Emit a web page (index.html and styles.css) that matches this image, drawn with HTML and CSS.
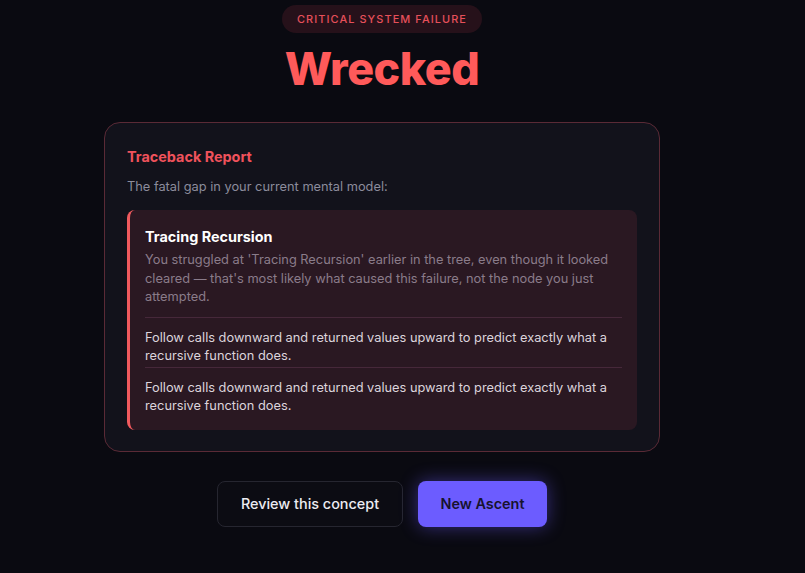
FILE: index.html
```html
<!DOCTYPE html>
<html>
<head>
<meta charset="utf-8">
<link rel="stylesheet" href="styles.css">
</head>
<body>
<main class="page">
  <div class="badge">Critical System Failure</div>
  <h1 class="title">Wrecked</h1>
  <section class="card">
    <h2 class="card-title">Traceback Report</h2>
    <p class="card-sub">The fatal gap in your current mental model:</p>
    <div class="gap">
      <h3 class="gap-title">Tracing Recursion</h3>
      <p class="gap-desc">You struggled at 'Tracing Recursion' earlier in the tree, even though it looked cleared — that's most likely what caused this failure, not the node you just attempted.</p>
      <p class="gap-item">Follow calls downward and returned values upward to predict exactly what a recursive function does.</p>
      <p class="gap-item">Follow calls downward and returned values upward to predict exactly what a recursive function does.</p>
    </div>
  </section>
  <div class="actions">
    <button class="btn btn-ghost">Review this concept</button>
    <button class="btn btn-primary">New Ascent</button>
  </div>
</main>
</body>
</html>
```
FILE: styles.css
```css
* { box-sizing: border-box; }
html, body { margin: 0; padding: 0; }
body {
  background: #0a0a11;
  font-family: Inter, "Noto Sans", sans-serif;
  color: #e8e8f0;
  height: 573px;
  overflow: hidden;
}
.page {
  width: 764px;
  padding-top: 5px;
  display: flex;
  flex-direction: column;
  align-items: center;
}
.badge {
  height: 28px;
  padding: 0 15px;
  border-radius: 14px;
  background: #26111a;
  color: #e6505a;
  font-size: 10.9px;
  font-weight: 500;
  letter-spacing: 1.1px;
  text-transform: uppercase;
  display: flex;
  align-items: center;
}
.title {
  margin: 9px 0 0;
  font-size: 44.8px;
  line-height: 54px;
  font-weight: 800;
  color: #ff5a5a;
  letter-spacing: -0.5px;
}
.card {
  margin-top: 26px;
  width: 556px;
  border: 1px solid #5a2a36;
  border-radius: 16px;
  background: #12121b;
  padding: 24px 22px 21px 22px;
}
.card-title {
  margin: 0;
  font-size: 14.4px;
  line-height: 20px;
  font-weight: 700;
  color: #f0525c;
}
.card-sub {
  margin: 11px 0 0;
  font-size: 12.8px;
  line-height: 18px;
  color: #8c8c9c;
}
.gap {
  margin-top: 14px;
  background: #2a1822;
  border-left: 3px solid #f05a5e;
  border-radius: 8px;
  padding: 17px 15px 14px 15px;
}
.gap-title {
  margin: 0;
  font-size: 14.4px;
  line-height: 20px;
  font-weight: 700;
  color: #ffffff;
}
.gap-desc {
  margin: 4px 0 0;
  font-size: 12.8px;
  line-height: 18.5px;
  color: #8a7c8a;
  padding-bottom: 10px;
  border-bottom: 1px solid #46283a;
}
.gap-item {
  margin: 0;
  padding: 11px 0 0;
  font-size: 12.8px;
  line-height: 18.5px;
  color: #dcd4dc;
}
.gap-item + .gap-item {
  border-top: 1px solid #46283a;
  margin-top: 1px;
}
.actions {
  margin-top: 29px;
  display: flex;
  gap: 15px;
}
.btn {
  height: 46px;
  border-radius: 8px;
  font-family: Inter, "Noto Sans", sans-serif;
  font-size: 14.4px;
  font-weight: 500;
  cursor: pointer;
}
.btn-ghost {
  width: 186px;
  background: #0c0c13;
  border: 1px solid #262630;
  color: #ececf2;
}
.btn-primary {
  width: 129px;
  background: #6c5cff;
  border: none;
  color: #17132e;
  font-weight: 600;
  box-shadow: 0 0 18px rgba(108, 92, 255, 0.45);
}
```
